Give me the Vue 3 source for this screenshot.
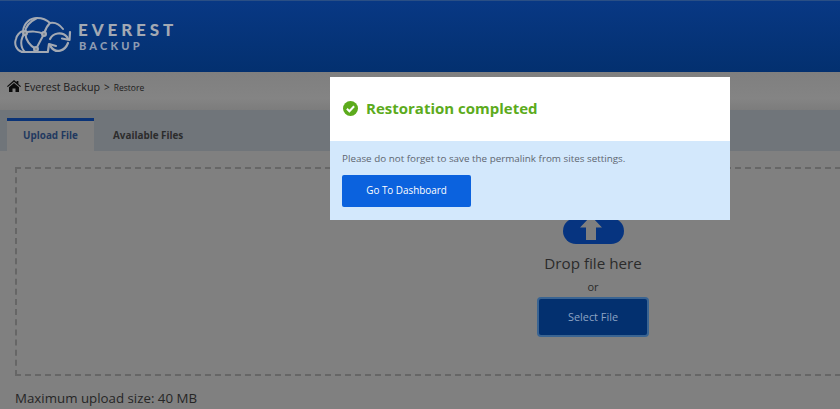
<script setup>
const tabs = [
  { label: 'Upload File', active: true },
  { label: 'Available Files', active: false }
]
</script>

<template>
  <div class="page">
    <header class="header">
      <div class="logo">
        <svg class="logo-mark" width="58" height="38" viewBox="0 0 58 38" fill="none" stroke="#a3a9b3" stroke-width="2" stroke-linecap="round" stroke-linejoin="round">
          <path d="M8 35 C2 33 0 27 2 22 C3 18 6 15 9 14 C10 6 16 1 23 1 C29 1 33 3 36 6 C41 5 46 8 49 12" />
          <path d="M8 35 H34" />
          <path d="M11 16 C16 14 24 14 30 17" />
          <path d="M30 17 L22 32" />
          <path d="M11 16 C12 23 16 29 22 32" />
          <path d="M23 1 C15 5 11 10 11 16" />
          <path d="M36 6 C33 9 31 13 30 17" />
          <path d="M11 16 C6 22 6 30 11 35" />
          <path d="M22 32 L20 35" />
          <path d="M36 22 C39 16 48 14 53 20 L54 22" stroke-width="2.200" />
          <path d="M56 15 L55.500 23 L48 21.500" stroke-width="2.200" />
          <path d="M54 26 C51 34 42 37 37 30 L36 28" stroke-width="2.200" />
          <path d="M34 34 L35 27 L42 29" stroke-width="2.200" />
          <circle cx="11" cy="16" r="2" fill="#7c868c" />
          <circle cx="30" cy="17" r="2" fill="#7c868c" />
          <circle cx="22" cy="32" r="2" fill="#7c868c" />
        </svg>
        <div class="logo-text">
          <span class="logo-title">EVEREST</span>
          <span class="logo-sub">BACKUP</span>
        </div>
      </div>
    </header>

    <nav class="crumbs">
      <svg class="home" width="14" height="12" viewBox="0 0 14 12">
        <path fill="#0c0c0c" d="M7 0 L9.600 2.300 V1 H11.400 V3.900 L14 6.200 L13.200 7.100 L7 1.700 L.8 7.100 L0 6.200 Z M2 7.200 L7 2.900 L12 7.200 V12 H8.500 V8.500 H5.500 V12 H2 Z" />
      </svg>
      <span class="crumb-main">Everest Backup</span>
      <span class="crumb-sep">&gt;</span>
      <span class="crumb-sub">Restore</span>
    </nav>

    <div class="tabs">
      <button v-for="tab in tabs" :key="tab.label" class="tab" :class="{ active: tab.active }">{{ tab.label }}</button>
    </div>

    <main class="content">
      <div class="dropzone">
        <div class="upload-pill">
          <svg class="arrow" width="24" height="20" viewBox="0 0 24 20">
            <path fill="#7f7f7f" d="M12 -4 L23 7.500 H17 V20 H7 V7.500 H1 Z" />
          </svg>
        </div>
        <p class="drop-title">Drop file here</p>
        <p class="drop-or">or</p>
        <button class="select-btn">Select File</button>
      </div>
      <p class="max-size">Maximum upload size: 40 MB</p>
    </main>

    <section class="modal">
      <div class="modal-head">
        <svg width="15" height="15" viewBox="0 0 15 15">
          <circle cx="7.500" cy="7.500" r="7.500" fill="#5cab1c" />
          <path d="M3.900 7.800 L6.400 10.300 L11.100 5.300" fill="none" stroke="#fff" stroke-width="2" />
        </svg>
        <h2 class="modal-title">Restoration completed</h2>
      </div>
      <div class="modal-body">
        <p class="modal-text">Please do not forget to save the permalink from sites settings.</p>
        <button class="dash-btn">Go To Dashboard</button>
      </div>
    </section>
  </div>
</template>

<style scoped>
.page {
  position: relative;
  width: 840px;
  height: 409px;
  overflow: hidden;
  background: #808080;
  font-family: "Open Sans", "Noto Sans", sans-serif;
}
.header {
  height: 72px;
  box-sizing: border-box;
  padding: 16px 0 0 14px;
  border-top: 1px solid #2a4f85;
  background: linear-gradient(#083884, #03306f);
}
.logo {
  display: flex;
  align-items: flex-start;
  gap: 6px;
}
.logo-text {
  display: flex;
  flex-direction: column;
  padding-top: 3px;
}
.logo-title {
  font-family: "Lato", sans-serif;
  font-size: 17px;
  line-height: 19px;
  font-weight: 900;
  letter-spacing: 3.900px;
  color: #a3a9b3;
}
.logo-sub {
  font-family: "Lato", sans-serif;
  font-size: 11px;
  line-height: 13px;
  margin-left: 1px;
  font-weight: 900;
  letter-spacing: 3.200px;
  color: #8f9cb2;
}
.crumbs {
  height: 38px;
  box-sizing: border-box;
  padding: 7px 0 0 7px;
  display: flex;
  align-items: flex-start;
  background: linear-gradient(#7f7f7f 0, #848484 70%, #7c7c7c 100%);
  color: #1c1c1c;
}
.home {
  margin: 1px 3px 0 0;
}
.crumb-main {
  font-size: 10.700px;
  line-height: 16px;
}
.crumb-sep {
  font-size: 10px;
  line-height: 16px;
  margin: 0 4px;
}
.crumb-sub {
  font-size: 8.500px;
  line-height: 17px;
}
.tabs {
  height: 41px;
  box-sizing: border-box;
  padding: 8px 0 0 7px;
  display: flex;
  background: #70757a;
}
.tab {
  width: 87px;
  height: 33px;
  padding: 0;
  border: 0;
  border-top: 3px solid transparent;
  background: transparent;
  font: 700 9.900px/1 "Open Sans", sans-serif;
  color: #2c2c2c;
}
.tab + .tab {
  width: auto;
  padding: 0 19px;
}
.tab.active {
  border-top-color: #0a3377;
  background: #7f7f7f;
  color: #22395f;
}
.content {
  padding: 16px 0 0 15px;
}
.dropzone {
  width: 1156px;
  height: 209px;
  box-sizing: border-box;
  border: 2px dashed #666;
  display: flex;
  flex-direction: column;
  align-items: center;
  padding-top: 49px;
}
.upload-pill {
  width: 61px;
  height: 26px;
  border-radius: 13px;
  background: #063480;
  display: flex;
  justify-content: center;
  overflow: hidden;
  flex: none;
}
.arrow {
  margin: 2px 5px 0 0;
}
.drop-title {
  margin: 9px 0 0;
  font-size: 15.200px;
  line-height: 20px;
  color: #2b2b2b;
}
.drop-or {
  margin: 7px 0 0;
  font-size: 11px;
  line-height: 14px;
  color: #2b2b2b;
}
.select-btn {
  width: 112px;
  height: 40px;
  margin-top: 3px;
  padding: 1px 0 0;
  border: 2px solid #3a6492;
  border-radius: 4px;
  background: #03306f;
  font: 400 10.900px/1 "Open Sans", sans-serif;
  color: #8ea4c4;
  flex: none;
}
.max-size {
  margin: 14px 0 0;
  font-size: 13.300px;
  line-height: 17px;
  color: #262626;
}
.modal {
  position: absolute;
  left: 330px;
  top: 77px;
  width: 400px;
  height: 143px;
}
.modal-head {
  height: 64px;
  box-sizing: border-box;
  background: #fff;
  display: flex;
  align-items: center;
  gap: 8px;
  padding: 0 0 2px 13px;
}
.modal-title {
  margin: 0;
  font-size: 15px;
  line-height: 20px;
  font-weight: 700;
  color: #5cab1c;
}
.modal-body {
  height: 79px;
  box-sizing: border-box;
  background: #d3e8fc;
  padding: 10px 12px 0;
}
.modal-text {
  margin: 0;
  font-size: 9.850px;
  line-height: 14px;
  color: #5e6670;
}
.dash-btn {
  display: block;
  width: 129px;
  height: 32px;
  margin-top: 10px;
  padding: 0;
  border: 0;
  border-radius: 2px;
  background: #0b62de;
  font: 400 9.900px/1 "Open Sans", sans-serif;
  color: #fff;
}
</style>
